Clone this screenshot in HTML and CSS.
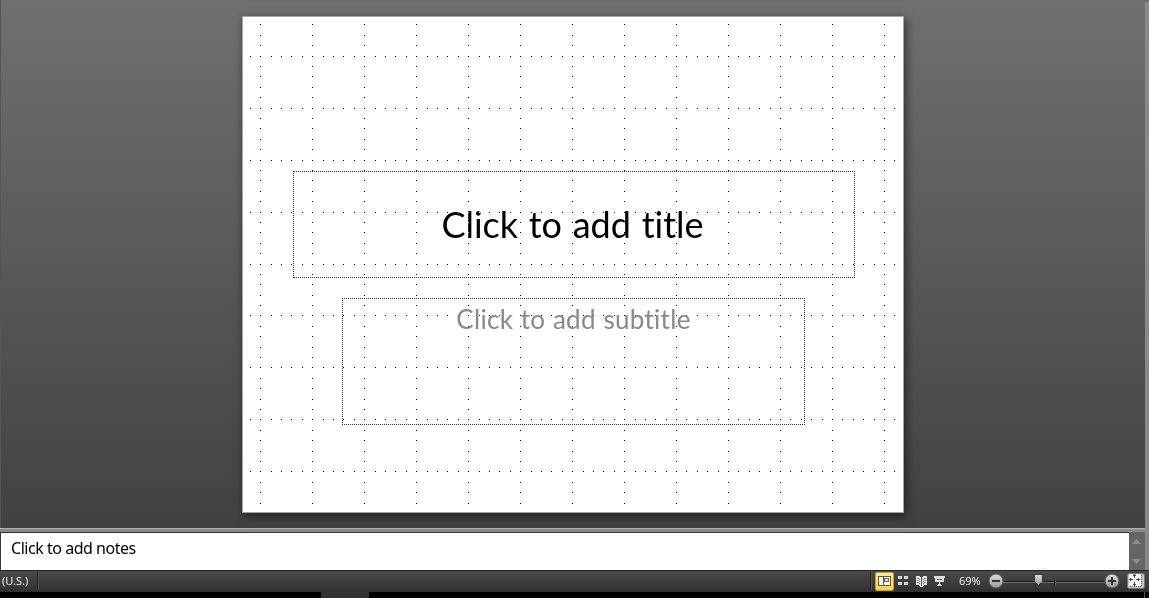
FILE: index.html
```html
<!DOCTYPE html>
<html lang="en">
<head>
<meta charset="utf-8">
<title>Presentation editor</title>
<link rel="stylesheet" href="styles.css">
</head>
<body>
<div class="app">
  <div class="workspace">
    <main class="canvas">
      <section class="slide">
        <div class="placeholder title"><span>Click to add title</span></div>
        <div class="placeholder subtitle"><span>Click to add subtitle</span></div>
        <svg class="grid" width="660" height="495" shape-rendering="crispEdges"><path id="dots" fill="#fff"/></svg>
      </section>
    </main>
    <div class="splitter"></div>
    <section class="notes">
      <div class="notes-text"><span>Click to add notes</span></div>
      <div class="scrollbar">
        <svg width="16" height="38"><path d="M3 12h9L7.500 7z M3 27h9l-4.500 5z" fill="#8c8c8c"/></svg>
      </div>
    </section>
  </div>
  <div class="edge"></div>
</div>
<footer class="status">
  <span class="lang">(U.S.)</span><i class="sep"></i>
  <div class="tools">
    <i class="sep"></i>
    <button class="view active"><svg width="13" height="10" shape-rendering="crispEdges"><path d="M0 0h13v10H0z" fill="#5f5338"/><path d="M1 1h4v8H1zM6 1h6v8H6z" fill="#fff"/><path d="M6 2h5v4H6z" fill="#72644b"/><path d="M7 3h3v2H7z" fill="#ddd"/></svg></button>
    <button class="view"><svg width="11" height="10" shape-rendering="crispEdges"><path d="M0 0h4v3H0zM6 0h4v3H6zM0 6h4v3H0zM6 6h4v3H6z" fill="#e4e4e4"/><path d="M1 1h2v1H1zM7 1h2v1H7zM1 7h2v1H1zM7 7h2v1H7z" fill="#aaa"/></svg></button>
    <button class="view"><svg width="11" height="11" shape-rendering="crispEdges"><path d="M0 0h4v1h3V0h4v9H8v1H7v1H4v-1H3V9H0z" fill="#e2e2e2"/><path d="M5 1h1v9H5z" fill="#555"/><path d="M1 2h2v1H1zM3 3h1v1H3zM1 4h2v1H1zM3 5h1v1H3zM1 6h2v1H1zM3 7h1v1H3zM8 2h2v1H8zM7 3h1v1H7zM8 4h2v1H8zM7 5h1v1H7zM8 6h2v1H8zM7 7h1v1H7z" fill="#888"/></svg></button>
    <button class="view"><svg width="11" height="10" shape-rendering="crispEdges"><path d="M0 0h11v2H0zM1 2h9v4H1zM5 6h1v2H5zM4 8h3v1H4zM3 9h5v1H3z" fill="#ddd"/><path d="M3 3h5v1H3z" fill="#666"/></svg></button>
    <span class="percent">69%</span>
    <svg class="zoom" width="134" height="20">
      <defs><linearGradient id="metal" x2="0" y2="1"><stop stop-color="#ddd"/><stop offset="1" stop-color="#999"/></linearGradient></defs>
      <path d="M15 10.500H117" stroke="#1c1c1c"/><path d="M15 11.500H117" stroke="#6a6a6a"/><path d="M66.500 7v8" stroke="#222"/><path d="M67.500 7v8" stroke="#555"/>
      <circle cx="8" cy="10" r="7" fill="url(#metal)" stroke="#555"/><path d="M4 9h8v2H4z" fill="#333"/>
      <path d="M46.500 3.500h8v7l-4 4-4-4z" fill="url(#metal)" stroke="#333"/>
      <circle cx="124" cy="10" r="7" fill="url(#metal)" stroke="#555"/><path d="M120 9h8v2h-8zM123 6h2v8h-2z" fill="#333"/>
    </svg>
    <button class="fit"><svg width="18" height="16"><rect x=".5" y=".5" width="17" height="15" rx="2" fill="#c4c4c4" stroke="#777"/><path d="M2 1h12v12H2z" fill="#f4f6f8"/><path d="M14.500 2v11.500H3" fill="none" stroke="#666" stroke-dasharray="1 1"/><g fill="#444" shape-rendering="crispEdges"><path d="M7 1h1v4H7zM6 2h3v1H6zM7 9h1v4H7zM6 11h3v1H6zM2 6h4v1H2zM3 5h1v3H3zM9 6h4v1H9zM11 5h1v3h-1z"/></g></svg></button>
  </div>
</footer>
<div class="taskbar"><i class="task"></i><i class="desktop"></i></div>
<script>
const ys = [24,35,45,56,66,76,87,97,108,118,128,139,149,160,170,180,191,201,212,222,232,243,253,264,274,284,295,305,315,326,336,347,357,367,378,388,399,409,419,430,440,451,461,471,482,492,503];
const xs = Array.from({length: 63}, (_, k) => Math.floor(260.8 + 10.395 * (k - 1)));
let d = '';
xs.forEach((x, i) => ys.forEach((y, j) => {
  if ((i - 1) % 5 === 0 || (j - 3) % 5 === 0) d += `M${x - 243} ${y - 17}h1v1h-1z`;
}));
document.getElementById('dots').setAttribute('d', d);
</script>
</body>
</html>
```
FILE: styles.css
```css
* { box-sizing: border-box; }
body { margin: 0; width: 1149px; height: 598px; overflow: hidden; background: #000; display: flex; flex-direction: column; }
button { border: 0; padding: 0; background: none; }
svg { display: block; }
.app { height: 570px; display: flex; background: #6b6b6b; }
.workspace { width: 1145px; display: flex; flex-direction: column; }
.canvas { height: 528px; padding: 16px 0 0 241px; background: linear-gradient(#707070, #414141); border-left: 1px solid #555; }
.slide { position: relative; width: 662px; height: 497px; background: #fff; border: 1px solid #a0a6ae; padding: 154px 0 0 50px; box-shadow: 2px 3px 9px rgba(0,0,0,.55); }
.placeholder { border: 1px dotted #333; text-align: center; font-family: Lato, sans-serif; font-variant-ligatures: none; white-space: nowrap; }
.placeholder span { display: inline-block; }
.title { width: 562px; height: 107px; padding-right: 3px; font-size: 36px; line-height: 105px; letter-spacing: 0; word-spacing: 1.5px; color: #000; }
.subtitle { width: 463px; height: 127px; margin: 20px 0 0 49px; font-size: 26px; line-height: 40px; letter-spacing: .3px; word-spacing: .6px; color: #898989; }
.grid { position: absolute; left: 0; top: 0; mix-blend-mode: difference; }
.splitter { height: 4px; background: #8a8a8a; border-top: 1px solid #b5b5b5; }
.notes { height: 38px; display: flex; }
.notes-text { width: 1129px; background: #fff; border-left: 1px solid #333; border-top: 1px solid #333; padding: 4px 0 0 10px; font: 16px/22px "Noto Sans", sans-serif; letter-spacing: -.47px; color: #000; }
.scrollbar { width: 16px; background: #656565; }
.edge { width: 4px; background: #888; margin-top: 2px; }
.status { height: 22px; display: flex; align-items: center; background: linear-gradient(#4b4b4b, #303030); border-top: 1px solid #222; padding-bottom: 1px; color: #eee; font: 11px/20px "Noto Sans", sans-serif; }
.lang { padding-left: 2px; width: 37px; }
.sep { width: 2px; height: 18px; background: #222; border-right: 1px solid #555; }
.tools { margin-left: auto; display: flex; align-items: center; width: 279px; }
.view { width: 18px; height: 18px; display: grid; place-items: center; }
.active { width: 19px; height: 19px; margin: 0 0 0 3px; background: linear-gradient(#ffe89a, #ffd24a); border: 1px solid #c69a35; border-radius: 2px; }
.percent { width: 29px; margin-left: 11px; white-space: nowrap; }
.fit { margin-left: 5px; }
.taskbar { height: 6px; display: flex; background: #000; }
.task { width: 48px; height: 6px; margin-left: 321px; background: #333; }
.desktop { width: 1px; height: 6px; margin-left: 775px; background: #555; }
```
